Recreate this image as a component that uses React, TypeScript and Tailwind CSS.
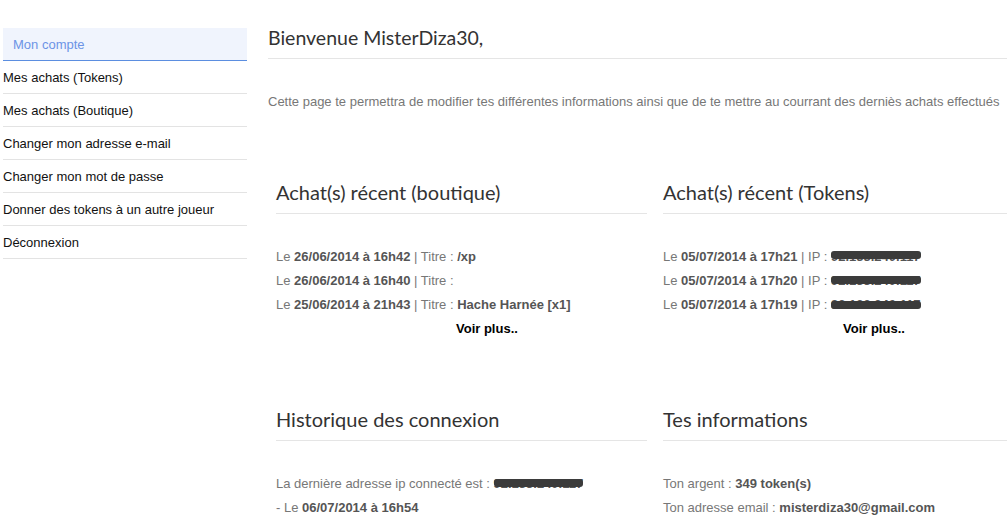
import React from "react";

const menu = [
  "Mes achats (Tokens)",
  "Mes achats (Boutique)",
  "Changer mon adresse e-mail",
  "Changer mon mot de passe",
  "Donner des tokens à un autre joueur",
  "Déconnexion",
];

function Redacted({ ip, shift = 0 }: { ip: string; shift?: number }) {
  return (
    <span className="relative inline-block font-bold text-[#555]">
      {ip}
      <span
        className="absolute left-0 right-0 h-[8px] rounded-[3px] bg-[#3b3b3b]"
        style={{ top: 7 + shift }}
      />
    </span>
  );
}

function Heading({ children }: { children: React.ReactNode }) {
  return (
    <h2 className="font-['Lato',sans-serif] text-[20px] leading-[24px] text-[#333] pb-[9px] border-b border-[#e5e5e5]">
      {children}
    </h2>
  );
}

function Section({ title, children }: { title: string; children: React.ReactNode }) {
  return (
    <div className="w-[387px] shrink-0 px-[8px]">
      <Heading>{title}</Heading>
      <div className="mt-[31px] leading-[24px] text-[#777]">{children}</div>
    </div>
  );
}

const B = ({ children }: { children: React.ReactNode }) => (
  <span className="font-bold text-[#555]">{children}</span>
);

export default function App() {
  return (
    <div className="flex w-[1007px] h-[527px] overflow-hidden bg-white font-['Liberation_Sans',Arial,sans-serif] text-[13px]">
      {/* Sidebar */}
      <nav className="ml-[3px] mt-[28px] w-[244px] shrink-0">
        <div className="h-[33px] flex items-center pl-[10px] pt-[2px] bg-[#f0f4fd] border-b border-[#5b8ee0] text-[#6c93e6]">
          Mon compte
        </div>
        {menu.map((m) => (
          <div key={m} className="h-[33px] flex items-center pt-[2px] border-b border-[#e3e3e3] text-[#111]">
            {m}
          </div>
        ))}
      </nav>

      {/* Main */}
      <main className="ml-[21px] flex-1 min-w-0">
        <h1 className="mt-[26px] font-['Lato',sans-serif] text-[19.5px] leading-[24px] text-[#333] pb-[8px] border-b border-[#e5e5e5]">
          Bienvenue MisterDiza30,
        </h1>
        <p className="mt-[34px] leading-[18px] text-[#777] whitespace-nowrap">
          Cette page te permettra de modifier tes différentes informations ainsi que de te mettre au courrant des derniès achats effectués
        </p>

        <div className="flex mt-[69px]">
          <Section title="Achat(s) récent (boutique)">
            <div>
              Le <B>26/06/2014 à 16h42</B> | Titre : <B>/xp</B>
            </div>
            <div>
              Le <B>26/06/2014 à 16h40</B> | Titre :
            </div>
            <div>
              Le <B>25/06/2014 à 21h43</B> | Titre : <B>Hache Harnée [x1]</B>
            </div>
            <div className="pl-[180px] font-bold text-black">Voir plus..</div>
          </Section>
          <Section title="Achat(s) récent (Tokens)">
            <div>
              Le <B>05/07/2014 à 17h21</B> | IP : <Redacted ip="92.133.240.117" shift={-1} />
            </div>
            <div>
              Le <B>05/07/2014 à 17h20</B> | IP : <Redacted ip="92.133.240.117" />
            </div>
            <div>
              Le <B>05/07/2014 à 17h19</B> | IP : <Redacted ip="92.133.240.117" shift={1} />
            </div>
            <div className="pl-[180px] font-bold text-black">Voir plus..</div>
          </Section>
        </div>

        <div className="flex mt-[66px]">
          <Section title="Historique des connexion">
            <div>
              La dernière adresse ip connecté est : <Redacted ip="92.133.240.117" />
            </div>
            <div>
              - Le <B>06/07/2014 à 16h54</B>
            </div>
          </Section>
          <Section title="Tes informations">
            <div>
              Ton argent : <B>349 token(s)</B>
            </div>
            <div>
              Ton adresse email : <B>misterdiza30@gmail.com</B>
            </div>
          </Section>
        </div>
      </main>
    </div>
  );
}
